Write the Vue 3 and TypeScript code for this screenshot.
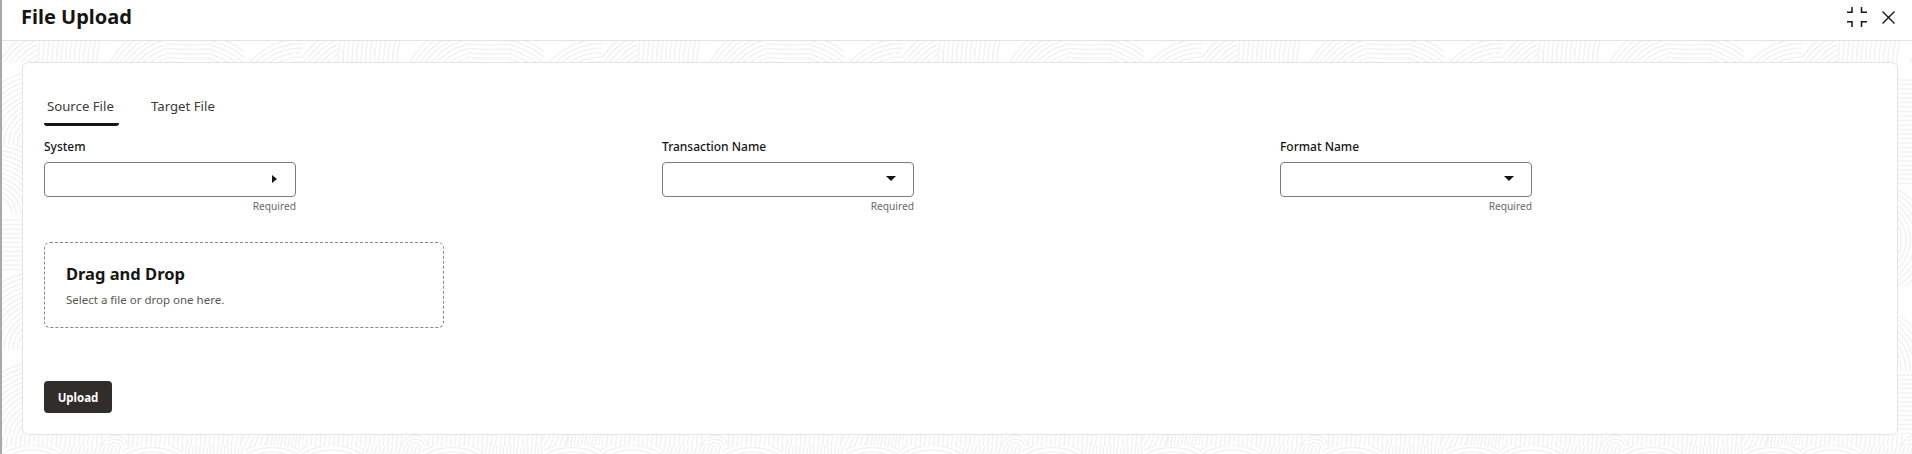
<script setup lang="ts">
const fields = [
  { label: "System", arrow: "right" },
  { label: "Transaction Name", arrow: "down" },
  { label: "Format Name", arrow: "down" },
];

// concentric arcs cropped to one cell of the backdrop tile
const arcs = (x: number, y: number, w: number, h: number, cx: number, cy: number, from: number, to: number, step = 4.5) => {
  let rings = "";
  for (let r = from; r <= to; r += step) {
    rings += `<circle cx='${cx - x}' cy='${cy - y}' r='${r}'/>`;
  }
  return `<svg x='${x}' y='${y}' width='${w}' height='${h}'>${rings}</svg>`;
};

// near vertical strokes for the band under the card
const stripes = (x: number, y: number, w: number, h: number, step = 4.5, lean = 1) => {
  let lines = "";
  for (let i = x; i < x + w; i += step) {
    lines += `<path d='M${i} ${y + h}L${i + lean} ${y}'/>`;
  }
  return lines;
};

const tile = `<svg xmlns='http://www.w3.org/2000/svg' width='300' height='454' fill='none' stroke='#f2f2f2' stroke-width='1.5'>${[
  // band above the card
  arcs(0, 41, 36, 22, 62, 100, 30, 75),
  arcs(36, 41, 62, 22, 150, 60, 55, 115),
  arcs(98, 41, 66, 22, 178, 100, 30, 80),
  arcs(164, 41, 46, 22, 190, -260, 305, 330),
  arcs(208, 41, 34, 22, 190, 120, 50, 90),
  arcs(242, 41, 58, 22, 300, 110, 35, 75),
  // left strip
  arcs(0, 70, 24, 75, 40, 145, 20, 75),
  arcs(0, 145, 24, 70, -10, 215, 20, 75),
  arcs(0, 215, 24, 55, 10, -260, 480, 530),
  arcs(0, 270, 24, 80, 40, 350, 20, 80),
  arcs(0, 360, 24, 75, 40, 440, 20, 80),
  // right strip
  arcs(95, 66, 20, 120, 105, -400, 480, 590),
  arcs(95, 186, 20, 100, 70, 240, 25, 60),
  arcs(95, 316, 20, 55, 60, 370, 30, 70),
  arcs(95, 372, 20, 64, 105, -300, 675, 735),
  // bands below the card
  stripes(0, 435, 100, 11),
  arcs(100, 435, 26, 11, 113, 449, 3, 15, 3.5),
  stripes(126, 435, 114, 11),
  stripes(265, 435, 35, 11, 3.5, 2),
  arcs(240, 435, 26, 11, 200, 420, 45, 70),
  arcs(0, 446, 60, 8, 30, 500, 50, 70),
  stripes(60, 446, 60, 8, 4, 3),
  arcs(120, 446, 60, 8, 150, 500, 48, 70),
  stripes(180, 446, 62, 8, 3.5, 1),
  arcs(242, 446, 58, 8, 270, 500, 48, 70),
].join("")}</svg>`;
const pageBackground = `url("data:image/svg+xml,${encodeURIComponent(tile)}")`;
</script>

<template>
  <div class="page" :style="{ backgroundImage: pageBackground }">
    <header class="topbar">
      <h1>File Upload</h1>
      <div class="actions">
        <svg width="20" height="20" viewBox="0 0 20 20" fill="none" stroke="#161513" stroke-width="1.5">
          <path d="M5 0v5.3H0M14.5 0v5.3H20M5 20v-5.3H0M14.5 20v-5.3H20" />
        </svg>
        <svg class="close" width="13" height="13" viewBox="0 0 13 13" fill="none" stroke="#161513" stroke-width="1.4">
          <path d="M.5.5l12 12M12.5.5l-12 12" />
        </svg>
      </div>
    </header>

    <main class="card">
      <nav class="tabs">
        <div class="tab active">Source File</div>
        <div class="tab">Target File</div>
      </nav>

      <div class="fields">
        <div v-for="field in fields" :key="field.label" class="field">
          <label>{{ field.label }}</label>
          <div class="input">
            <span :class="field.arrow === 'right' ? 'arrow-right' : 'arrow-down'" />
          </div>
          <div class="hint">Required</div>
        </div>
      </div>

      <div class="dropzone">
        <h2>Drag and Drop</h2>
        <p>Select a file or drop one here.</p>
      </div>

      <button class="upload" type="button">Upload</button>
    </main>
  </div>
</template>

<style scoped>
.page {
  box-sizing: border-box;
  width: 1912px;
  height: 454px;
  overflow: hidden;
  border-left: 2px solid #a9a9a9;
  background-color: #fff;
  background-repeat: repeat-x;
  color: #161513;
  font-family: "Noto Sans", "Open Sans", sans-serif;
}

.topbar {
  display: flex;
  justify-content: space-between;
  align-items: flex-start;
  box-sizing: border-box;
  height: 41px;
  padding: 0 17px 0 19px;
  background: #fff;
  border-bottom: 1px solid #e4e3e2;
}

h1 {
  margin: 0;
  font-size: 20px;
  line-height: 34px;
  font-weight: 700;
}

.actions {
  display: flex;
  align-items: flex-start;
  gap: 15px;
  padding-top: 7px;
}

.close {
  margin-top: 4px;
}

.card {
  box-sizing: border-box;
  display: flex;
  flex-direction: column;
  align-items: flex-start;
  width: 1876px;
  height: 373px;
  margin: 21px 0 0 20px;
  padding: 27px 21px 0;
  background: #fff;
  border: 1px solid #e4e3e2;
  border-radius: 6px;
}

.tabs {
  display: flex;
  gap: 29px;
  height: 36px;
}

.tab {
  box-sizing: border-box;
  height: 36px;
  padding: 0 3px;
  font-size: 13.2px;
  line-height: 33px;
  white-space: nowrap;
  color: #3c3a38;
}

.tab.active {
  width: 75px;
  border-bottom: 3px solid #161513;
  border-radius: 0 0 3px 3px;
}

.fields {
  display: flex;
  gap: 366px;
  margin-top: 12px;
}

.field {
  width: 252px;
}

label {
  display: block;
  font-size: 12px;
  line-height: 17px;
  font-weight: 500;
  margin-bottom: 7px;
}

.input {
  box-sizing: border-box;
  display: flex;
  justify-content: flex-end;
  align-items: center;
  height: 35px;
  padding-right: 18px;
  background: #fff;
  border: 1px solid #7f7d7b;
  border-radius: 4px;
}

.arrow-right {
  margin-bottom: 2px;
  border-left: 5px solid #161513;
  border-top: 4px solid transparent;
  border-bottom: 4px solid transparent;
}

.arrow-down {
  margin-right: -1px;
  margin-bottom: 2px;
  border-top: 5px solid #161513;
  border-left: 5px solid transparent;
  border-right: 5px solid transparent;
}

.hint {
  margin-top: 2px;
  text-align: right;
  font-size: 10.2px;
  line-height: 15px;
  color: #6a6866;
}

.dropzone {
  box-sizing: border-box;
  width: 400px;
  height: 86px;
  margin-top: 28px;
  padding: 19px 21px 0;
  border: 1px dashed #8a8886;
  border-radius: 6px;
}

h2 {
  margin: 0;
  font-size: 16.5px;
  line-height: 24px;
  font-weight: 700;
}

p {
  margin: 5px 0 0;
  font-size: 11.5px;
  line-height: 17px;
  color: #5a5856;
}

.upload {
  box-sizing: border-box;
  width: 68px;
  height: 32px;
  margin-top: 53px;
  padding: 0;
  background: #312d2a;
  border: 0;
  border-radius: 4px;
  color: #fff;
  font-family: inherit;
  font-size: 11.5px;
  font-weight: 700;
}
</style>
